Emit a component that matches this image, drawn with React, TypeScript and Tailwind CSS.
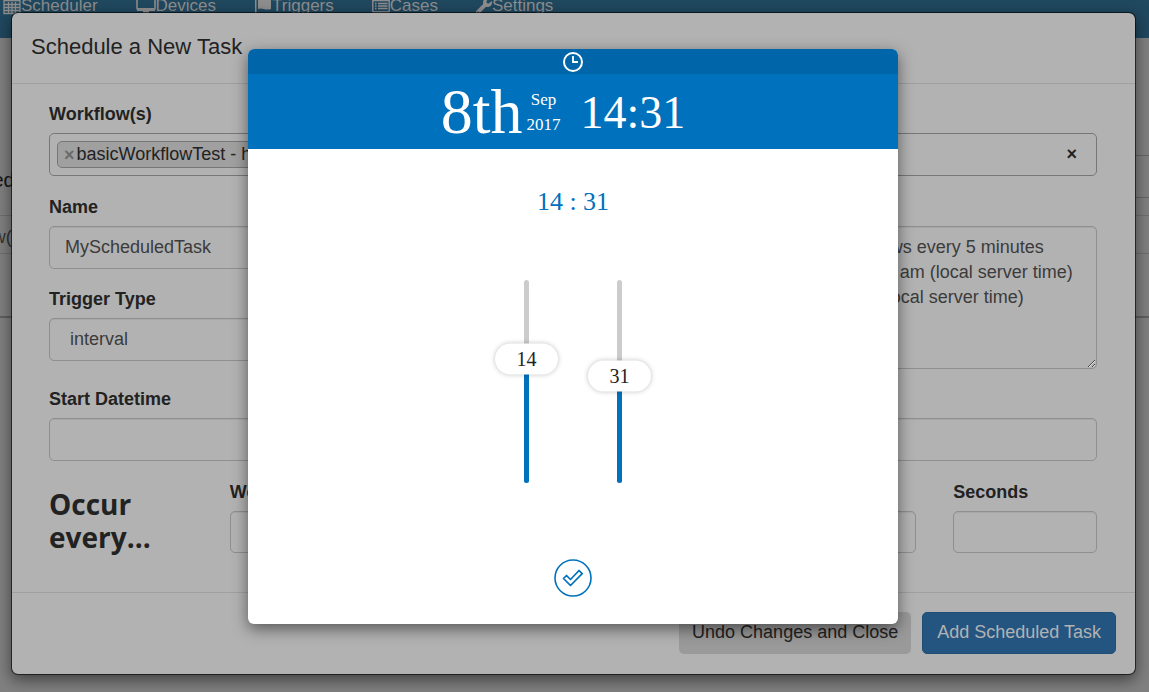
import { useState } from "react";
import type { ReactNode } from "react";
import { FaWrench } from "react-icons/fa";

const fieldClass =
  "block w-full rounded-[5px] border border-[#8f8f8f] bg-[#b2b2b2] text-[18px] leading-[25px] text-[#3b3b3b] shadow-[inset_0_1px_1px_rgba(0,0,0,0.06)] outline-none";
const labelClass = "mb-[6px] block h-[25px] text-[18px] font-bold leading-[25px] text-[#222]";

function CalendarIcon() {
  return (
    <svg width="18" height="18" viewBox="0 0 18 18" fill="none" stroke="currentColor" aria-hidden="true">
      <path d="M1 3.5h16v13H1zM1 7.5h16M1 10.5h16M1 13.5h16M5.5 5v12M9 5v12M12.5 5v12" strokeWidth="1.3" />
      <path d="M4.5 1v3M13.5 1v3" strokeWidth="2" />
    </svg>
  );
}

function MonitorIcon() {
  return (
    <svg width="20" height="18" viewBox="0 0 20 18" aria-hidden="true">
      <rect x="1" y="1" width="18" height="11.5" rx="1" fill="none" stroke="currentColor" strokeWidth="1.6" />
      <path d="M1 11h18v3H1zM7 14h6v2H7z" fill="currentColor" />
    </svg>
  );
}

function FlagIcon() {
  return (
    <svg width="18" height="18" viewBox="0 0 18 18" aria-hidden="true">
      <path d="M1 1h1.5v16H1z" fill="currentColor" />
      <path d="M4 2c4-2 7 2 13 0v10c-6 2-9-2-13 0z" fill="currentColor" />
    </svg>
  );
}

function ListIcon() {
  return (
    <svg width="18" height="18" viewBox="0 0 18 18" fill="none" stroke="currentColor" aria-hidden="true">
      <rect x="0.8" y="2.5" width="16.4" height="12.5" rx="0.8" strokeWidth="1.4" />
      <path d="M1 3.5h16M3 6.5h1.5M3 9h1.5M3 11.5h1.5M6 6.5h9.5M6 9h9.5M6 11.5h9.5" strokeWidth="1.4" />
    </svg>
  );
}

const navItems: { label: string; icon: ReactNode }[] = [
  { label: "Scheduler", icon: <CalendarIcon /> },
  { label: "Devices", icon: <MonitorIcon /> },
  { label: "Triggers", icon: <FlagIcon /> },
  { label: "Cases", icon: <ListIcon /> },
  { label: "Settings", icon: <FaWrench className="size-4" aria-hidden="true" /> },
];

function Page() {
  return (
    <div className="min-h-screen overflow-hidden bg-[#808080]">
      <nav className="h-[38px] overflow-hidden bg-[#20485f]">
        <ul className="-mt-[7px] flex gap-[38px] pl-[3px] text-[17px] leading-[25px] text-[#8e8e8e]">
          {navItems.map((item) => (
            <li key={item.label}>
              <a href="#" className="flex items-center">
                {item.icon}
                {item.label}
              </a>
            </li>
          ))}
        </ul>
      </nav>
      <main className="mt-[117px] border-b-2 border-b-[#606060]">
        <div className="-ml-[42px] flex h-[43px]">
          <h2 className="w-[240px] pt-[11px] text-[20px] leading-[28px] text-[#161616]">Scheduled Tasks</h2>
          <div className="grow border-y border-[#656565]" />
        </div>
        <div className="mt-[17px] h-[39px] border-y border-[#6f6f6f]">
          <div className="-ml-[68px] pt-[9px] text-[18px] leading-[25px] text-[#333]">Workflow(s)</div>
        </div>
        <div className="h-[62px]" />
      </main>
    </div>
  );
}

function Dialog() {
  const [name, setName] = useState("MyScheduledTask");
  return (
    <section
      role="dialog"
      aria-labelledby="dialog-title"
      className="rounded-[7px] border border-black/60 bg-[#b2b2b2] bg-clip-padding shadow-[0_5px_15px_rgba(0,0,0,0.5)]"
    >
      <header className="h-[71px] border-b border-[#a0a0a0] px-[19px] pt-[18px]">
        <h4 id="dialog-title" className="text-[22px] leading-[32px] text-[#222]">
          Schedule a New Task
        </h4>
      </header>
      <form onSubmit={(e) => e.preventDefault()}>
        <div className="pb-[38px] pl-[37px] pr-[38px] pt-[18px]">
          <div className="mb-[19px]">
            <label htmlFor="workflow-search" className={labelClass}>
              Workflow(s)
            </label>
            <div className="flex h-[43px] items-center rounded-[5px] border border-[#777] px-[7px]">
              <span className="flex h-[27px] items-center whitespace-nowrap rounded-[5px] border border-[#777] bg-[#a0a0a0] px-[6px] text-[18px] text-[#222]">
                <button type="button" aria-label="Remove" className="mr-[2px] text-[18px] font-bold leading-none text-[#6b6b6b]">
                  ×
                </button>
                basicWorkflowTest - helloWorldWorkflow
              </span>
              <input id="workflow-search" className="min-w-0 grow bg-transparent outline-none" />
              <button type="button" aria-label="Clear all" className="mb-[2px] mr-[12px] text-[18px] font-bold leading-none text-[#222]">
                ×
              </button>
            </div>
          </div>
          <div className="mb-[18px] grid grid-cols-2 gap-x-[37px]">
            <div className="flex flex-col gap-[18px]">
              <div>
                <label htmlFor="name" className={labelClass}>
                  Name
                </label>
                <input
                  id="name"
                  value={name}
                  onChange={(e) => setName(e.target.value)}
                  className={`${fieldClass} h-[43px] px-[15px]`}
                />
              </div>
              <div>
                <label htmlFor="trigger" className={labelClass}>
                  Trigger Type
                </label>
                <select id="trigger" className={`${fieldClass} h-[43px] appearance-none px-[20px]`}>
                  <option>interval</option>
                  <option>cron</option>
                  <option>date</option>
                </select>
              </div>
            </div>
            <div>
              <label htmlFor="description" className={labelClass}>
                Description
              </label>
              <textarea
                id="description"
                className={`${fieldClass} h-[143px] px-[16px] py-[8px]`}
                defaultValue={
                  "Executes all of the selected workflows every 5 minutes\nbeginning on September 8th at 9:00 am (local server time)\nending on September 9th at noon (local server time)"
                }
              />
            </div>
          </div>
          <div className="mb-[18px]">
            <label htmlFor="start" className={labelClass}>
              Start Datetime
            </label>
            <input id="start" className={`${fieldClass} h-[43px] px-[15px]`} />
          </div>
          <div className="grid grid-cols-6 gap-x-[37px]">
            <h3 className="pt-[9px] font-['Open_Sans',sans-serif] text-[28px] font-bold leading-[33px] text-[#222]">
              Occur every...
            </h3>
            {["Weeks", "Days", "Hours", "Minutes", "Seconds"].map((unit) => (
              <div key={unit} className="pt-px">
                <label htmlFor={unit} className={labelClass}>
                  {unit}
                </label>
                <input id={unit} className={`${fieldClass} h-[42px] px-[15px]`} />
              </div>
            ))}
          </div>
        </div>
        <footer className="flex justify-end gap-[11px] border-t border-[#a0a0a0] px-[19px] pb-[20px] pt-[19px]">
          <button type="button" className="h-[42px] rounded-[5px] bg-[#9a9a9a] px-[13px] pb-[2px] text-[18px] text-[#222]">
            Undo Changes and Close
          </button>
          <button
            type="submit"
            className="h-[42px] rounded-[5px] border border-[#204d74] bg-[#245580] px-[14px] pb-[2px] text-[18px] text-[#b2b2b2]"
          >
            Add Scheduled Task
          </button>
        </footer>
      </form>
    </section>
  );
}

function TimeSlider({
  label,
  max,
  value,
  onChange,
}: {
  label: string;
  max: number;
  value: number;
  onChange: (value: number) => void;
}) {
  const percent = (value / max) * 100;
  return (
    <div className="relative flex h-[203px] w-[63px] justify-center">
      <div className="flex w-[5px] flex-col justify-end overflow-hidden rounded-[3px] bg-[#ccc]">
        <div className="bg-[#0071bc]" style={{ height: `${percent}%` }} />
      </div>
      <output
        className="absolute left-0 flex h-[31px] w-full translate-y-1/2 items-center justify-center rounded-full bg-white text-[20px] leading-[31px] text-[#222] shadow-[0_0_5px_rgba(0,0,0,0.25)]"
        style={{ bottom: `${percent}%` }}
      >
        {String(value).padStart(2, "0")}
      </output>
      <input
        type="range"
        aria-label={label}
        min={0}
        max={max}
        value={value}
        onChange={(e) => onChange(Number(e.target.value))}
        className="absolute inset-0 h-full w-full cursor-pointer opacity-0 [direction:rtl] [writing-mode:vertical-lr]"
      />
    </div>
  );
}

function TimePicker() {
  const [hours, setHours] = useState(14);
  const [minutes, setMinutes] = useState(31);
  const hh = String(hours).padStart(2, "0");
  const mm = String(minutes).padStart(2, "0");
  return (
    <section
      aria-label="Time picker"
      className="flex h-[575px] w-[650px] flex-col items-center overflow-hidden rounded-[6px] bg-white font-['Liberation_Serif',serif] shadow-[0_5px_15px_rgba(0,0,0,0.5)]"
    >
      <div className="flex h-[25px] w-full items-center justify-center bg-[#0066a9] text-white">
        <svg width="22" height="22" viewBox="0 0 22 22" fill="none" stroke="currentColor" strokeWidth="2" aria-hidden="true">
          <circle cx="11" cy="11" r="9" />
          <path d="M11 5v6h5" strokeWidth="1.8" />
        </svg>
      </div>
      <div className="flex h-[75px] w-full items-center justify-center bg-[#0071bc] pr-[20px] text-white">
        <span className="text-[64px] leading-[75px]">8th</span>
        <span className="ml-[4px] flex flex-col text-center text-[17px] leading-[25px]">
          <span>Sep</span>
          <span>2017</span>
        </span>
        <span className="ml-[20px] pt-[3px] text-[46px] leading-[72px]">
          {hh}:{mm}
        </span>
      </div>
      <div className="mt-[38px] text-[26px] leading-[30px] text-[#0071bc]">
        {hh} : {mm}
      </div>
      <div className="mt-[63px] flex gap-[30px]">
        <TimeSlider label="Hours" max={23} value={hours} onChange={setHours} />
        <TimeSlider label="Minutes" max={59} value={minutes} onChange={setMinutes} />
      </div>
      <button type="button" aria-label="Confirm" className="mt-[76px] text-[#0071bc]">
        <svg width="38" height="38" viewBox="0 0 38 38" fill="none" stroke="currentColor" aria-hidden="true">
          <circle cx="19" cy="19" r="18" strokeWidth="1.6" />
          <path d="M9.5 19.5l3-3 4 4 8.5-9 3.2 3.2L16.5 26.5z" strokeWidth="1.7" strokeLinejoin="round" />
        </svg>
      </button>
    </section>
  );
}

export default function App() {
  return (
    <div className="relative h-screen overflow-hidden font-['Liberation_Sans',Arial,sans-serif]">
      <Page />
      <div className="absolute inset-x-0 top-0 pl-[11px] pr-[13px] pt-[12px]">
        <Dialog />
      </div>
      <div className="absolute inset-x-0 top-0 flex justify-center pr-[3px] pt-[49px]">
        <TimePicker />
      </div>
    </div>
  );
}
